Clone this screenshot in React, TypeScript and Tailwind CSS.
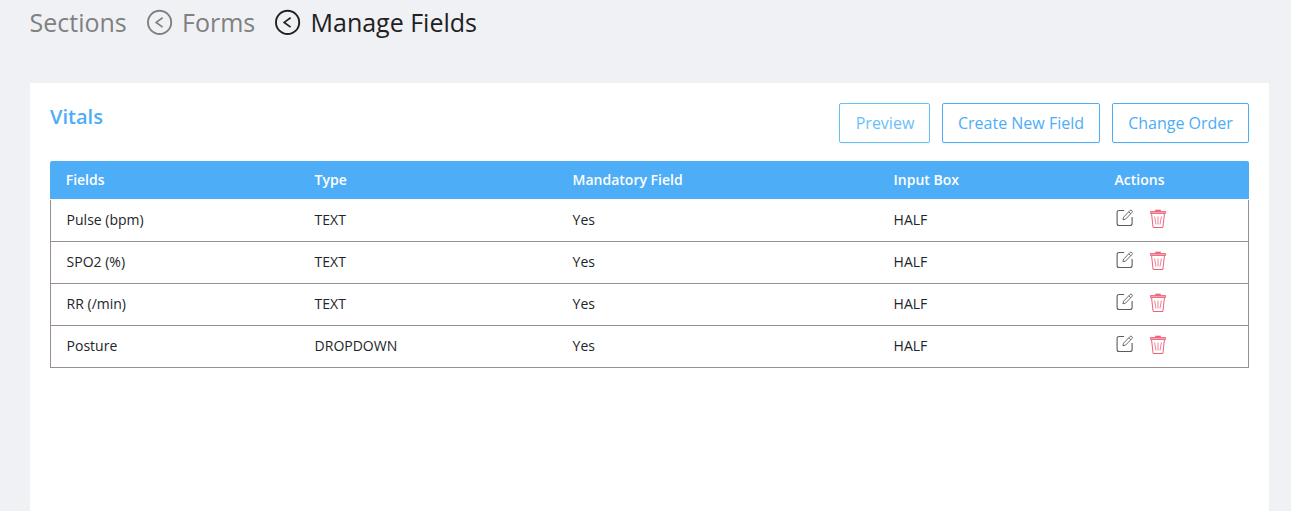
const rows = [
  { field: 'Pulse (bpm)', type: 'TEXT', mandatory: 'Yes', box: 'HALF' },
  { field: 'SPO2 (%)', type: 'TEXT', mandatory: 'Yes', box: 'HALF' },
  { field: 'RR (/min)', type: 'TEXT', mandatory: 'Yes', box: 'HALF' },
  { field: 'Posture', type: 'DROPDOWN', mandatory: 'Yes', box: 'HALF' },
];

function BackIcon() {
  return (
    <svg width="26" height="26" viewBox="0 0 26 26" fill="none" stroke="currentColor" className="shrink-0">
      <circle cx="12.6" cy="13.4" r="11.6" strokeWidth="1.9" />
      <path d="M15.6 8.7 9.2 13.4l6.4 4.7" strokeWidth="1.7" />
    </svg>
  );
}

function EditIcon() {
  return (
    <svg width="18" height="18" viewBox="0 0 18 18" fill="none" stroke="#5c5c5c" strokeWidth="1" className="overflow-visible">
      <g transform="translate(0.6 0)">
        <path d="M8.5 1.5H3.5Q1.5 1.5 1.5 3.5V14.5Q1.5 16.5 3.5 16.5H14.5Q16.5 16.5 16.5 14.5V8" strokeWidth="1.1" />
        <path d="M8 8.2 14.3 1.6Q15.3.6 16.3 1.6T16.3 3.6L10 10.1 7.3 10.8Z M13.2 2.8l2 2" strokeWidth=".9" />
      </g>
    </svg>
  );
}

function TrashIcon() {
  return (
    <svg width="18" height="20" viewBox="0 0 18 20" fill="none" stroke="#ee6178">
      <path d="M1.5 2.5H16.5V4.5H1.5Z" fill="#f7a3b0" strokeWidth=".9" />
      <path d="M6.2 1.5H11.8" strokeWidth="1.6" />
      <path d="M2.6 5 4.1 18.5H13.9L15.4 5" strokeWidth="1" />
      <path d="M5.6 7.5 7 15.5M9 7.5V15.5M12.4 7.5 11 15.5" strokeWidth=".8" />
    </svg>
  );
}

export default function App() {
  return (
    <div className="flex h-[511px] flex-col overflow-hidden bg-[#f0f1f5] font-['Open_Sans',sans-serif] text-[#212529]">
      <nav className="flex h-[83px] shrink-0 items-start pl-[29.5px] pt-[4px] text-[25px] leading-[36px] text-[#808080]">
        <span className="w-[117px]">Sections</span>
        <span className="flex w-[128px] items-center gap-[9.5px]">
          <BackIcon />
          Forms
        </span>
        <span className="flex items-center gap-[10px] text-[#212121]">
          <BackIcon />
          Manage Fields
        </span>
      </nav>
      <main className="ml-[30px] mr-[22px] flex-1 bg-white px-5 pt-5">
        <div className="flex h-[58px] items-start justify-between">
          <h1 className="text-xl font-semibold leading-7 text-[#4dadf7]">Vitals</h1>
          <div className="flex gap-3 text-base text-[#4dadf7]">
            <button className="h-10 w-[91px] rounded-xs border border-[#66bff8] pl-px text-[#69c0f9] shadow-xs">Preview</button>
            <button className="h-10 w-[158px] rounded-xs border border-[#4dadf7] shadow-xs">Create New Field</button>
            <button className="h-10 w-[137px] rounded-xs border border-[#4dadf7] shadow-xs">Change Order</button>
          </div>
        </div>
        <section className="text-sm">
          <div className="mb-px grid h-[38px] grid-cols-[248.9px_258px_321px_221px_1fr] items-center rounded-t-xs bg-[#4dadf7] pl-[15.7px] font-semibold text-white">
            <span>Fields</span>
            <span>Type</span>
            <span>Mandatory Field</span>
            <span>Input Box</span>
            <span>Actions</span>
          </div>
          {rows.map((row) => (
            <div
              key={row.field}
              className="grid h-[42px] grid-cols-[248px_258px_321px_221px_1fr] items-center border border-t-0 border-[#998e91] pb-px pl-[15.6px]"
            >
              <span>{row.field}</span>
              <span>{row.type}</span>
              <span>{row.mandatory}</span>
              <span>{row.box}</span>
              <span className="flex gap-4 pb-[3px] pl-[0.4px]">
                <EditIcon />
                <TrashIcon />
              </span>
            </div>
          ))}
        </section>
      </main>
    </div>
  );
}
